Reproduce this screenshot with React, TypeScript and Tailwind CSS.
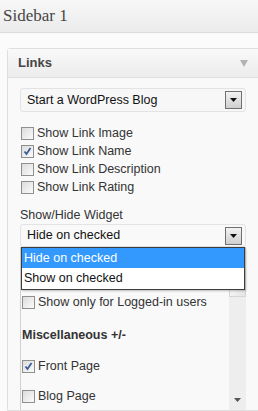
import React from 'react'

const sans = { fontFamily: '"Liberation Sans", Arial, sans-serif' }

function Box({ checked = false }: { checked?: boolean }) {
  return (
    <span className="relative flex h-[13px] w-[13px] shrink-0 items-center justify-center border border-[#8e8f8f] bg-gradient-to-br from-[#dcdcdc] to-[#fbfbfb]">
      {checked && (
        <svg width="9" height="9" viewBox="0 0 9 9" className="absolute">
          <path d="M1.5 4.5 L3.5 7 L7.5 1" fill="none" stroke="#3e5c9a" strokeWidth="1.8" />
        </svg>
      )}
    </span>
  )
}

function CheckRow({ label, checked = false }: { label: string; checked?: boolean }) {
  return (
    <div className="flex h-[18px] items-center gap-[3px]">
      <Box checked={checked} />
      <span className="text-[12.5px] text-[#333]">{label}</span>
    </div>
  )
}

function ArrowButton() {
  return (
    <span className="flex h-[18px] w-[17px] items-center justify-center border border-[#707070] bg-gradient-to-b from-[#f2f2f2] to-[#cfcfcf]">
      <svg width="7" height="4" viewBox="0 0 7 4">
        <path d="M0 0 H7 L3.5 4 Z" fill="#111" />
      </svg>
    </span>
  )
}

export default function App() {
  return (
    <div className="h-[411px] w-[258px] overflow-hidden bg-[#fbfbfb]" style={sans}>
      <div className="flex h-[33px] items-center border-b border-[#dcdcdc] bg-gradient-to-b from-[#f7f7f7] to-[#ebebeb] pl-[3px]">
        <span className="text-[17px] text-[#464646]" style={{ fontFamily: '"Liberation Serif", Georgia, serif' }}>
          Sidebar 1
        </span>
      </div>

      <div className="pl-[7px] pt-[15px]">
        <div className="w-[270px] rounded-tl-[3px] border border-[#dfdfdf] bg-[#f9f9f9]">
          <div className="flex h-[29px] items-center justify-between border-b border-[#dfdfdf] bg-gradient-to-b from-[#f9f9f9] to-[#ececec] pl-[10px] pr-[28px]">
            <span className="text-[13px] font-bold text-[#464646]">Links</span>
            <svg width="8" height="7" viewBox="0 0 8 7">
              <path d="M0 0 H8 L4 7 Z" fill="#b3b3b3" />
            </svg>
          </div>

          <div className="pl-[12px] pt-[10px]">
            <div className="flex h-[24px] w-[226px] items-center justify-between rounded-[3px] border border-[#e3e3e3] bg-[#f7f7f7] pl-[6px] pr-[3px]">
              <span className="text-[12.5px] text-[#111]">Start a WordPress Blog</span>
              <ArrowButton />
            </div>

            <div className="mt-[12px] flex flex-col pl-[1px]">
              <CheckRow label="Show Link Image" />
              <CheckRow label="Show Link Name" checked />
              <CheckRow label="Show Link Description" />
              <CheckRow label="Show Link Rating" />
            </div>

            <div className="mt-[11px] h-[16px] text-[12.5px] leading-[16px] text-[#333]">Show/Hide Widget</div>

            <div className="mt-[1px] flex h-[23px] w-[226px] items-center justify-between rounded-[3px] border border-[#e3e3e3] bg-[#f9f9f9] pl-[6px] pr-[3px]">
              <span className="text-[12.5px] text-[#111]">Hide on checked</span>
              <ArrowButton />
            </div>

            <div className="relative flex h-[163px] w-[226px]">
              <div className="flex-1 border-l border-[#d0d0d0] pl-[1px] pt-[46px]">
                <CheckRow label="Show only for Logged-in users" />
                <div className="mt-[15px] h-[18px] text-[12.5px] font-bold leading-[18px] text-[#333]">Miscellaneous +/-</div>
                <div className="mt-[13px]">
                  <CheckRow label="Front Page" checked />
                </div>
                <div className="mt-[12px]">
                  <CheckRow label="Blog Page" />
                </div>
              </div>
              <div className="flex w-[17px] flex-col justify-between bg-[#eeeeee]">
                <div className="h-[50px] border border-[#d6d6d6] bg-gradient-to-r from-[#f4f4f4] to-[#e4e4e4]" />
                <div className="flex h-[16px] items-start justify-center pt-[4px]">
                  <svg width="7" height="4" viewBox="0 0 7 4">
                    <path d="M0 0 H7 L3.5 4 Z" fill="#555" />
                  </svg>
                </div>
              </div>

              <div className="absolute left-[1px] top-0 w-[224px] border border-[#3c3c3c] bg-white shadow-[1px_1px_2px_rgba(0,0,0,0.25)]">
                <div className="flex h-[20px] items-center bg-[#3399ff] pl-[2px] text-[12.5px] text-white">Hide on checked</div>
                <div className="flex h-[21px] items-center pl-[2px] text-[12.5px] text-[#111]">Show on checked</div>
              </div>
            </div>
          </div>
        </div>
      </div>
    </div>
  )
}
